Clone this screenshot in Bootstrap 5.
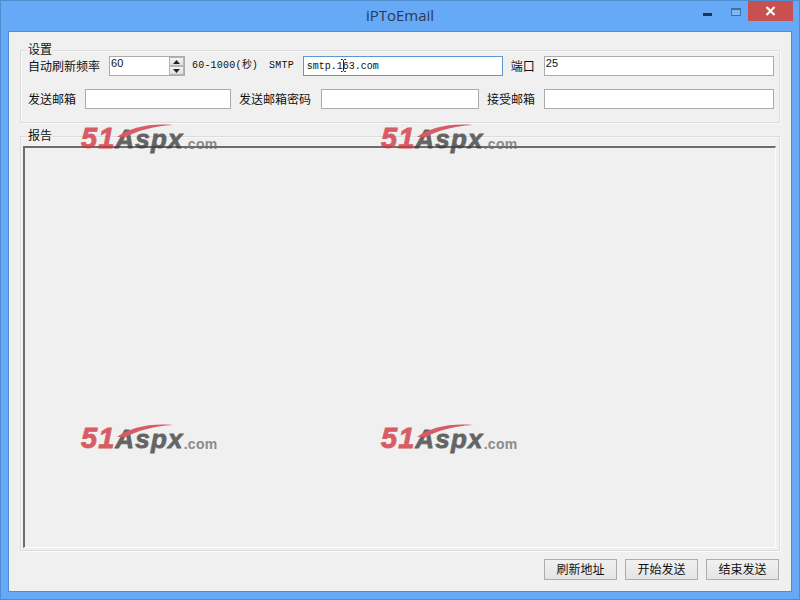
<!DOCTYPE html>
<html lang="zh-CN">
<head>
  <meta charset="UTF-8" />
  <meta name="viewport" content="width=device-width, initial-scale=1.0" />
  <title>iPToEmail</title>
  <link href="https://cdn.jsdelivr.net/npm/bootstrap@5.3.2/dist/css/bootstrap.min.css" rel="stylesheet" />
  <style>
    html, body { width: 800px; height: 600px; overflow: hidden; }
    body { background: #66a9f6; font: 12px/16px "Noto Sans CJK SC", "Liberation Sans", sans-serif; color: #111; }
    .app-window { width: 800px; height: 600px; border: 1px solid #4c8ccf; border-top-color: #4f8dcf; }
    .app-title { height: 30px; }
    .title-text { font: 15px/29px "Open Sans", "Liberation Sans", sans-serif; color: #2b3a4d; }
    .win-btns { top: 0; right: 6px; }
    .win-min { width: 9px; height: 3px; background: #1f3554; margin: 12px 19px 0 0; }
    .win-max { width: 10px; height: 8px; border: 1px solid #44709f; border-top-width: 2px; background: #7fb8f2; margin: 7px 7px 0 0; }
    .win-close { width: 45px; height: 20px; background: #c75050; color: #fff; }
    .app-client { width: 784px; height: 561px; margin-left: 7px; background: #f0f0f0; border: 1px solid #4f8dcf; padding: 18px 11px 0 11px; }
    .group-box { border: 1px solid #dcdcdc; box-shadow: inset 1px 1px 0 #f8f8f8, 1px 1px 0 #fbfbfb; }
    .group-settings { height: 73px; padding: 5px 4px 0 7px; }
    .group-report { height: 415px; margin-top: 13px; padding: 9px 3px 3px 2px; }
    .group-title { left: 6px; top: -10px; padding: 0 1px; font-size: 12px; line-height: 16px; background: #f0f0f0; }
    .report-area { height: 402px; border-style: solid; border-width: 2px 1px 1px 2px; border-color: #6d6d6d #fdfdfd #fdfdfd #6d6d6d; background: #f0f0f0; }
    .field-row { height: 20px; }
    .field-row + .field-row { margin-top: 13px; }
    .field-label { white-space: nowrap; }
    .mono-text { font: 10px/16px "Liberation Mono", monospace; white-space: nowrap; }
    .hint-range { margin-left: 7px; letter-spacing: .2px; }
    .hint-smtp { margin-left: 11px; letter-spacing: .2px; }
    .label-gap { margin-left: 8px; }
    .win-input.form-control { height: 20px; min-height: 0; padding: 0 1px 6px; border: 1px solid #ababab; border-radius: 0; background: #fff; font: 11px/12px "Liberation Sans", sans-serif; color: #111; box-shadow: none; }
    .win-input.mono-input.form-control { font: 10px/18px "Liberation Mono", monospace; padding: 0 3px; border-color: #5f97cf; }
    .w-freq { width: 76px; margin-left: 9px; }
    .w-smtp { width: 200px; margin-left: 9px; }
    .w-port { width: 230px; margin-left: 9px; }
    .w-from { width: 146px; margin-left: 9px; }
    .w-pass { width: 158px; margin-left: 10px; }
    .spin-box { top: 1px; right: 1px; width: 15px; height: 18px; }
    .spin-btn { height: 9px; border: 1px solid #b5b5b5; background: linear-gradient(#f4f4f4, #dedede); }
    .cursor-beam { left: 37px; top: 3px; }
    .btn.win-btn { width: 73px; height: 21px; padding: 0 0 2px; border: 1px solid #adadad; border-radius: 0; background: linear-gradient(#f1f1f1, #e4e4e4); font-size: 12px; line-height: 16px; color: #111; }
    .action-bar { margin-top: 8px; margin-right: -10px; gap: 8px; padding-right: 11px; }
    .stamp { width: 140px; height: 30px; opacity: .78; white-space: nowrap; pointer-events: none; }
    .stamp-a { left: 72px; top: 91px; }
    .stamp-b { left: 372px; top: 91px; }
    .stamp-c { left: 72px; top: 391px; }
    .stamp-d { left: 372px; top: 391px; }
    .stamp-num { font: italic 700 29px/30px "Liberation Sans", sans-serif; color: #d2333f; letter-spacing: 1px; -webkit-text-stroke: .8px #d2333f; }
    .stamp-word { font: italic 700 26px/30px "Liberation Sans", sans-serif; color: #3d3d3d; letter-spacing: 1.200px; -webkit-text-stroke: .8px #3d3d3d; }
    .stamp-dom { font: 700 14px/30px "Liberation Sans", sans-serif; color: #6f6f6f; position: relative; top: 1px; letter-spacing: .3px; }
    .stamp-arc { left: 34px; top: 0; }
  </style>
</head>
<body>
  <div class="app-window position-relative">
    <div class="app-title position-relative text-center">
      <span class="title-text">iPToEmail</span>
      <div class="win-btns position-absolute d-flex">
        <div class="win-min"></div>
        <div class="win-max"></div>
        <div class="win-close d-flex align-items-center justify-content-center">
          <svg width="11" height="10" viewBox="0 0 11 10"><path d="M1.500 1 9.500 9M9.500 1 1.500 9" stroke="#fff" stroke-width="2.200" fill="none"/></svg>
        </div>
      </div>
    </div>

    <div class="app-client position-relative">
      <div class="group-box group-settings position-relative">
        <span class="group-title position-absolute">设置</span>
        <div class="field-row d-flex align-items-center">
          <span class="field-label">自动刷新频率</span>
          <div class="w-freq position-relative">
            <input class="form-control win-input" type="text" value="60" />
            <div class="spin-box position-absolute d-flex flex-column">
              <div class="spin-btn d-flex align-items-center justify-content-center"><svg width="7" height="4" viewBox="0 0 7 4"><path d="M3.500 0 7 4H0z" fill="#222"/></svg></div>
              <div class="spin-btn d-flex align-items-center justify-content-center"><svg width="7" height="4" viewBox="0 0 7 4"><path d="M0 0h7L3.500 4z" fill="#222"/></svg></div>
            </div>
          </div>
          <span class="mono-text hint-range">60-1000(秒)</span>
          <span class="mono-text hint-smtp">SMTP</span>
          <div class="w-smtp position-relative">
            <input class="form-control win-input mono-input" type="text" value="smtp.163.com" />
            <svg class="cursor-beam position-absolute" width="7" height="13" viewBox="0 0 7 13"><path d="M1 .5h1.500L3.500 1.500 4.500 .5H6M3.500 1.500v10M1 12.500h1.500l1-1 1 1H6" stroke="#222" fill="none"/></svg>
          </div>
          <span class="field-label label-gap">端口</span>
          <input class="form-control win-input w-port" type="text" value="25" />
        </div>
        <div class="field-row d-flex align-items-center">
          <span class="field-label">发送邮箱</span>
          <input class="form-control win-input w-from" type="text" />
          <span class="field-label label-gap">发送邮箱密码</span>
          <input class="form-control win-input w-pass" type="text" />
          <span class="field-label label-gap">接受邮箱</span>
          <input class="form-control win-input w-port" type="text" />
        </div>
      </div>

      <div class="group-box group-report position-relative">
        <span class="group-title position-absolute">报告</span>
        <div class="report-area"></div>
      </div>

      <div class="action-bar d-flex justify-content-end">
        <button type="button" class="btn win-btn">刷新地址</button>
        <button type="button" class="btn win-btn">开始发送</button>
        <button type="button" class="btn win-btn">结束发送</button>
      </div>

      <div class="stamp stamp-a position-absolute"><svg class="stamp-arc position-absolute" width="60" height="14" viewBox="0 0 60 14"><path d="M2 14C14 5 34 0 58 2 38 3 22 8 11 14z" fill="#d2333f"/></svg><span class="stamp-num">51</span><span class="stamp-word">Aspx</span><span class="stamp-dom">.com</span></div>
      <div class="stamp stamp-b position-absolute"><svg class="stamp-arc position-absolute" width="60" height="14" viewBox="0 0 60 14"><path d="M2 14C14 5 34 0 58 2 38 3 22 8 11 14z" fill="#d2333f"/></svg><span class="stamp-num">51</span><span class="stamp-word">Aspx</span><span class="stamp-dom">.com</span></div>
      <div class="stamp stamp-c position-absolute"><svg class="stamp-arc position-absolute" width="60" height="14" viewBox="0 0 60 14"><path d="M2 14C14 5 34 0 58 2 38 3 22 8 11 14z" fill="#d2333f"/></svg><span class="stamp-num">51</span><span class="stamp-word">Aspx</span><span class="stamp-dom">.com</span></div>
      <div class="stamp stamp-d position-absolute"><svg class="stamp-arc position-absolute" width="60" height="14" viewBox="0 0 60 14"><path d="M2 14C14 5 34 0 58 2 38 3 22 8 11 14z" fill="#d2333f"/></svg><span class="stamp-num">51</span><span class="stamp-word">Aspx</span><span class="stamp-dom">.com</span></div>
    </div>
  </div>

  <script src="https://cdn.jsdelivr.net/npm/bootstrap@5.3.2/dist/js/bootstrap.bundle.min.js"></script>
</body>
</html>
